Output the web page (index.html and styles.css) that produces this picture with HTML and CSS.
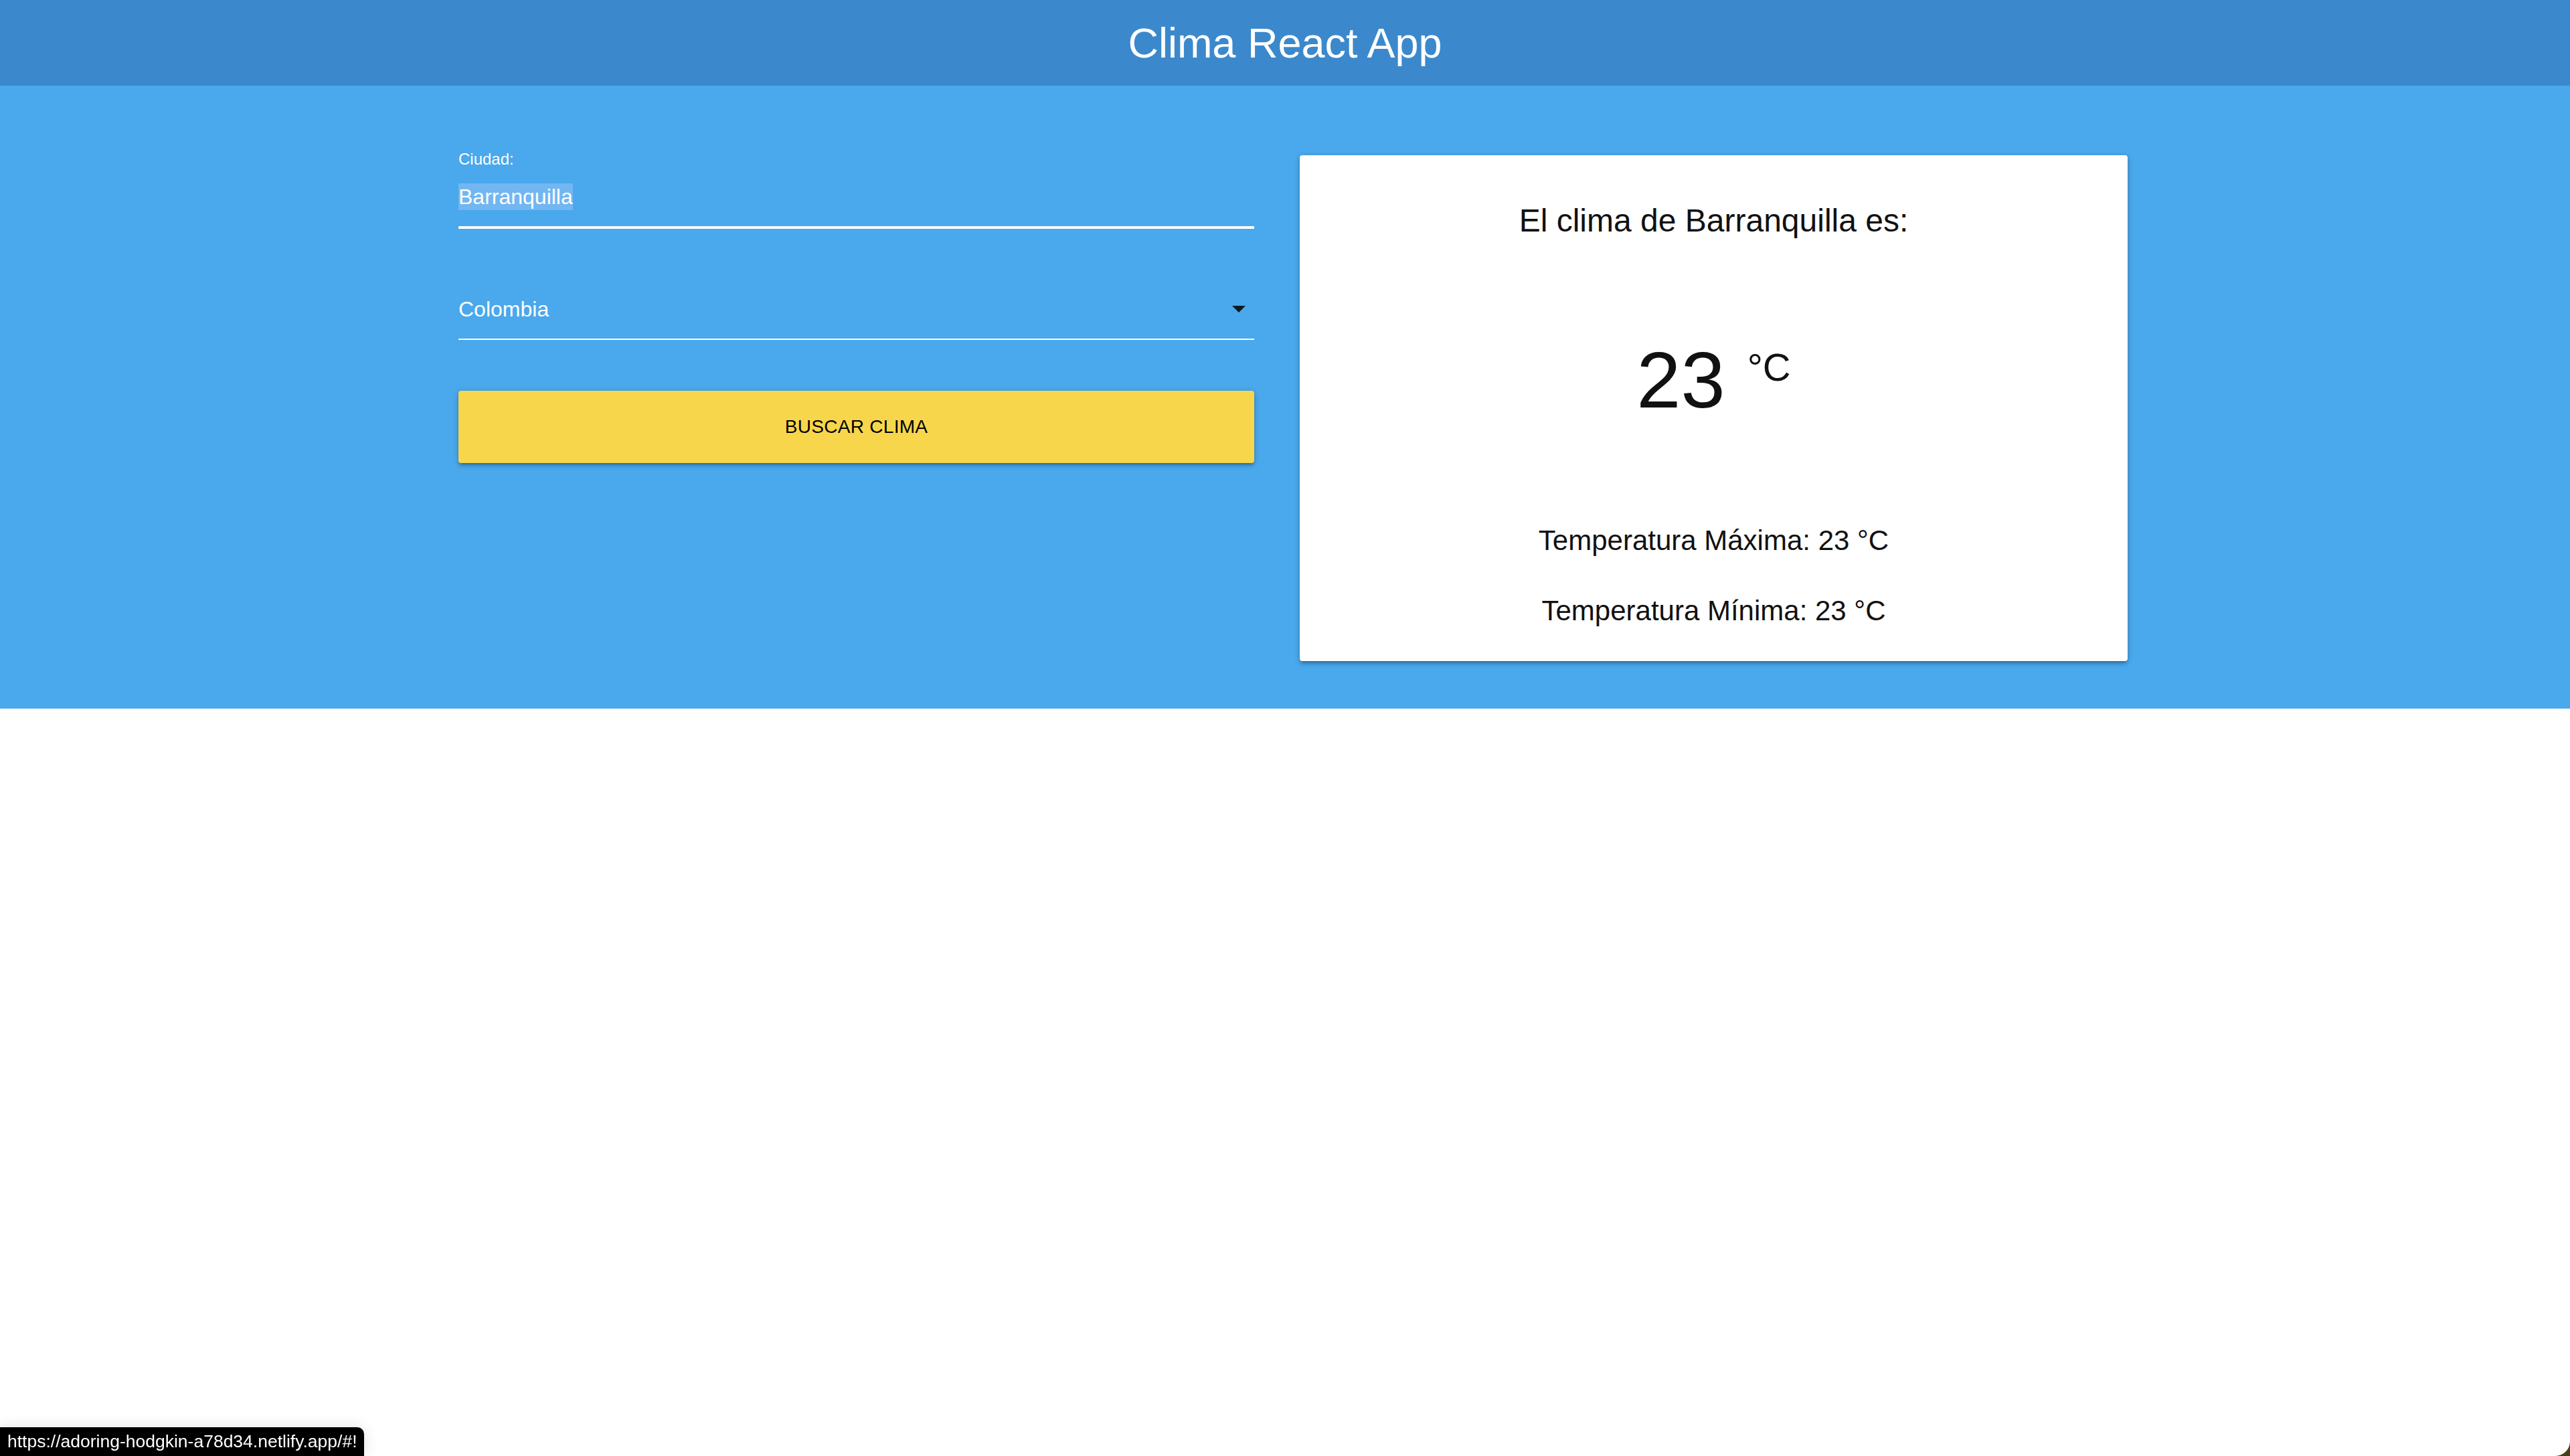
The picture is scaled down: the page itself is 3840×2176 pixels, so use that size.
FILE: index.html
```html
<!DOCTYPE html>
<html lang="es">
<head>
<meta charset="utf-8">
<title>Clima React App</title>
<link rel="stylesheet" href="styles.css">
</head>
<body>
<header class="topbar">
  <h1 class="brand">Clima React App</h1>
</header>
<main class="hero">
  <div class="row">
    <form class="search">
      <label class="field-label">Ciudad:</label>
      <div class="text-field"><span class="selected">Barranquilla</span></div>
      <div class="select-field">
        <span class="select-value">Colombia</span>
        <svg class="caret" width="20" height="10" viewBox="0 0 20 10"><path d="M0 0h20L10 10z" fill="#111820"/></svg>
      </div>
      <button type="button" class="btn">BUSCAR CLIMA</button>
    </form>
    <section class="card">
      <h2 class="card-title">El clima de Barranquilla es:</h2>
      <p class="temp">23 <span class="unit">&deg;C</span></p>
      <p class="minmax first">Temperatura Máxima: 23 &deg;C</p>
      <p class="minmax second">Temperatura Mínima: 23 &deg;C</p>
    </section>
  </div>
</main>
<div class="statusbar">https://adoring-hodgkin-a78d34.netlify.app/#!</div>
</body>
</html>
```

FILE: styles.css
```css
html {
  background: #4a3d1c;
  margin: 0;
  padding: 0;
}
body {
  margin: 0;
  min-height: 100vh;
  background: #ffffff;
  border-radius: 0 0 22px 22px;
  font-family: "Liberation Sans", Arial, sans-serif;
  overflow: hidden;
}
.topbar {
  height: 128px;
  background: #3b89cc;
  display: flex;
  align-items: center;
  justify-content: center;
}
.brand {
  margin: 0;
  font-weight: 400;
  font-size: 63px;
  line-height: 1;
  color: #ffffff;
}
.hero {
  background: #4aa8ec;
  padding: 98px 0 71px 685px;
}
.row {
  display: flex;
  align-items: flex-start;
  gap: 68px;
}
.search {
  width: 1189px;
  display: flex;
  flex-direction: column;
  margin: 0;
}
.field-label {
  font-size: 24px;
  line-height: 24px;
  height: 24px;
  color: #ffffff;
}
.text-field {
  margin-top: 28px;
  font-size: 32px;
  line-height: 32px;
  color: #ffffff;
  padding-bottom: 28px;
  border-bottom: 4px solid #ffffff;
}
.selected {
  background: #72b6f2;
  padding: 2px 0;
}
.select-field {
  margin-top: 104px;
  display: flex;
  align-items: center;
  justify-content: space-between;
  font-size: 32px;
  line-height: 32px;
  color: #ffffff;
  padding-bottom: 28px;
  border-bottom: 2px solid #ffffff;
}
.caret {
  display: block;
  margin-right: 13px;
}
.btn {
  margin-top: 76px;
  height: 108px;
  border: none;
  border-radius: 4px;
  background: #f8d64b;
  color: #000000;
  font-family: "Liberation Sans", Arial, sans-serif;
  font-size: 28px;
  letter-spacing: 0.3px;
  padding: 0;
  box-shadow: 0 4px 4px 0 rgba(0,0,0,0.14), 0 6px 2px -4px rgba(0,0,0,0.12), 0 2px 10px 0 rgba(0,0,0,0.2);
}
.card {
  width: 1237px;
  margin-top: 6px;
  background: #ffffff;
  border-radius: 4px;
  box-shadow: 0 4px 4px 0 rgba(0,0,0,0.14), 0 6px 2px -4px rgba(0,0,0,0.12), 0 2px 10px 0 rgba(0,0,0,0.2);
  padding: 74px 0 54px;
  text-align: center;
  color: #111111;
}
.card-title {
  margin: 0;
  font-weight: 400;
  font-size: 48px;
  line-height: 1;
}
.temp {
  margin: 154px 0 0;
  font-size: 119px;
  line-height: 1;
}
.unit {
  font-size: 58px;
  line-height: 1;
  vertical-align: 40px;
}
.minmax {
  margin: 0;
  font-size: 42px;
  line-height: 1;
}
.minmax.first {
  margin-top: 160px;
}
.minmax.second {
  margin-top: 63px;
}
.statusbar {
  position: fixed;
  left: 0;
  bottom: 0;
  height: 43px;
  line-height: 43px;
  padding: 0 10px 0 11px;
  background: #000000;
  color: #ffffff;
  font-family: "Liberation Sans", Arial, sans-serif;
  font-size: 26.5px;
  border-top-right-radius: 10px;
  box-shadow: 0 0 22px rgba(0,0,0,0.12);
}
```
